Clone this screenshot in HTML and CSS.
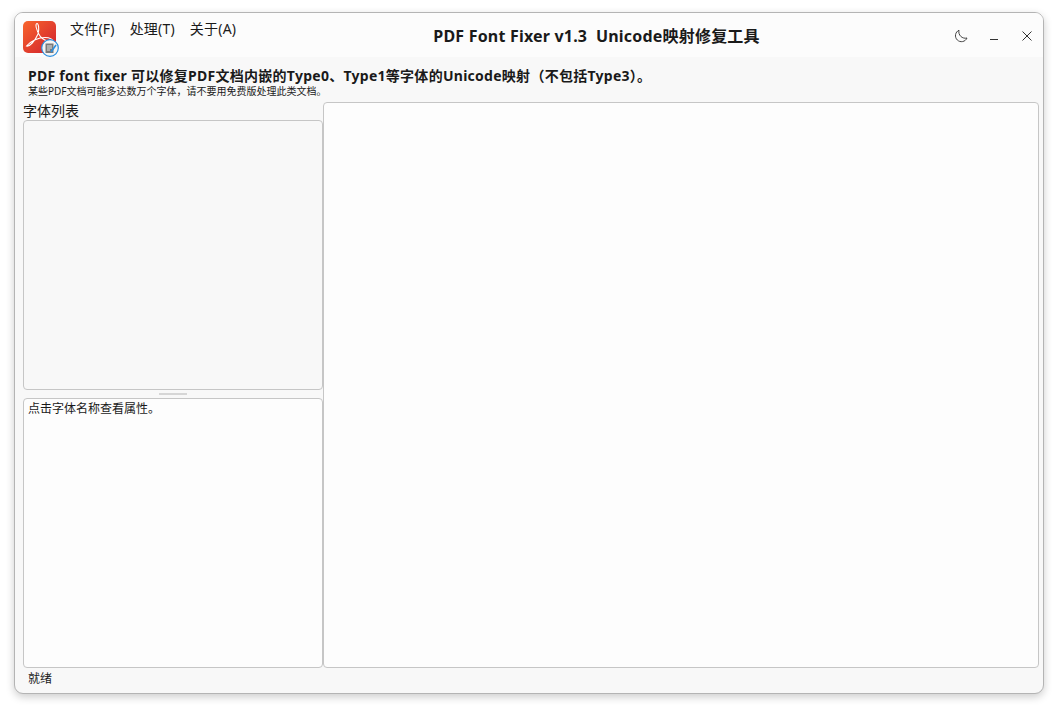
FILE: index.html
```html
<!DOCTYPE html>
<html lang="zh-CN">
<head>
    <meta charset="UTF-8">
    <title>PDF Font Fixer</title>
    <link rel="stylesheet" href="styles.css">
</head>
<body>
    <div class="window">
        <!-- 标题栏 -->
        <div class="titlebar">
            <svg class="app-icon" width="37" height="37" viewBox="0 0 37 37">
                <defs>
                    <linearGradient id="logoBg" x1="0" y1="0" x2="1" y2="1">
                        <stop offset="0" stop-color="#f8652c"/>
                        <stop offset="1" stop-color="#d0202f"/>
                    </linearGradient>
                </defs>
                <rect x="0" y="0" width="33" height="32" rx="5" fill="url(#logoBg)"/>
                <path d="M3.5 25 C6.5 26 12 20 15 13 C16.5 8 15.5 2.5 14 2.5 C12 2.5 13 9 17 15 C19 18 24 21 29 20 C31 19 27 16.5 22 16.5 C16 16.5 8 19.5 3.5 25 Z" fill="none" stroke="#fff" stroke-width="1.1"/>
                <circle cx="27" cy="27" r="8.3" fill="#f4f4f4" stroke="#2b8fe0" stroke-width="1.2"/>
                <rect x="22.5" y="22.5" width="8" height="9.5" fill="#7a7a7a"/>
                <path d="M24 25h5M24 27h5M24 29h3" stroke="#fff" stroke-width="0.8"/>
                <path d="M28 31l5-7" stroke="#2b8fe0" stroke-width="1.6"/>
            </svg>
            <div class="menu">
                <span>文件(F)</span>
                <span>处理(T)</span>
                <span>关于(A)</span>
            </div>
            <div class="app-title">PDF Font Fixer v1.3&nbsp; Unicode映射修复工具</div>
            <div class="win-buttons">
                <svg width="16" height="16" viewBox="0 0 16 16" fill="none" stroke="#444" stroke-width="1">
                    <path d="M6 2.2 A6 6 0 1 0 14 10 A6.5 6.5 0 0 1 6 2.2 Z"/>
                </svg>
                <svg width="16" height="16" viewBox="0 0 16 16" fill="none" stroke="#333" stroke-width="1">
                    <path d="M4 11.5h8"/>
                </svg>
                <svg width="16" height="16" viewBox="0 0 16 16" fill="none" stroke="#333" stroke-width="1">
                    <path d="M3.5 3.5l9 9M12.5 3.5l-9 9"/>
                </svg>
            </div>
        </div>

        <div class="intro">
            <div class="headline">PDF font fixer 可以修复PDF文档内嵌的Type0、Type1等字体的Unicode映射（不包括Type3）。</div>
            <div class="subline">某些PDF文档可能多达数万个字体，请不要用免费版处理此类文档。</div>
        </div>

        <div class="main">
            <div class="left-col">
                <div class="list-label">字体列表</div>
                <div class="font-list"></div>
                <div class="splitter"><span class="splitter-handle"></span></div>
                <div class="font-props">点击字体名称查看属性。</div>
            </div>
            <div class="preview"></div>
        </div>

        <div class="statusbar">就绪</div>
    </div>
</body>
</html>
```

FILE: styles.css
```css
html, body {
    margin: 0;
    padding: 0;
    height: 710px;
    overflow: hidden;
    background-color: #ffffff;
}

body {
    font-family: "Noto Sans", "Noto Sans CJK SC", sans-serif;
    color: #1a1a1a;
}

.window {
    box-sizing: border-box;
    width: 1030px;
    height: 682px;
    margin: 12px 0 0 14px;
    display: flex;
    flex-direction: column;
    background-color: #f8f8f8;
    border: 1px solid #b4b4b4;
    border-radius: 9px;
    box-shadow: 0 3px 8px rgba(0, 0, 0, 0.2);
    overflow: hidden;
}

.titlebar {
    height: 44px;
    flex: none;
    display: flex;
    align-items: flex-start;
    position: relative;
    background-color: #fcfcfc;
}

.app-icon {
    margin: 8px 0 0 8px;
    flex: none;
}

.menu {
    display: flex;
    gap: 15px;
    margin: 6px 0 0 10px;
    font-size: 14px;
    line-height: 20px;
    letter-spacing: 0.2px;
}

.app-title {
    position: absolute;
    left: 0;
    right: 0;
    top: 12px;
    padding-left: 133px;
    text-align: center;
    font-size: 16px;
    line-height: 22px;
    font-weight: bold;
    letter-spacing: 0.2px;
    box-sizing: border-box;
    width: 1030px;
    pointer-events: none;
}

.win-buttons {
    margin: 15px 8px 0 auto;
    display: flex;
    gap: 17px;
}

.intro {
    flex: none;
    padding: 9px 13px 0;
}

.headline {
    font-size: 14px;
    line-height: 19px;
    font-weight: bold;
    letter-spacing: 0.27px;
}

.subline {
    font-size: 10px;
    line-height: 11px;
    padding-top: 1px;
    height: 10px;
}

.main {
    flex: none;
    display: flex;
    padding: 0 4px 0 8px;
    margin-top: 6px;
}

.left-col {
    width: 300px;
    flex: none;
    display: flex;
    flex-direction: column;
}

.list-label {
    font-size: 14px;
    line-height: 17px;
    height: 18px;
}

.font-list {
    box-sizing: border-box;
    height: 270px;
    background-color: #f8f8f8;
    border: 1px solid #c6c6c6;
    border-radius: 4px;
}

.splitter {
    height: 8px;
    display: flex;
    justify-content: center;
    align-items: center;
}

.splitter-handle {
    width: 28px;
    height: 2px;
    background-color: #d6d6d6;
}

.font-props {
    box-sizing: border-box;
    height: 270px;
    padding: 2px 4px;
    font-size: 12px;
    line-height: 16px;
    background-color: #fdfdfd;
    border: 1px solid #c6c6c6;
    border-radius: 4px;
}

.preview {
    box-sizing: border-box;
    flex: 1;
    height: 566px;
    background-color: #fdfdfd;
    border: 1px solid #c6c6c6;
    border-radius: 4px;
}

.statusbar {
    flex: none;
    height: 25px;
    padding-left: 13px;
    font-size: 12px;
    line-height: 21px;
}
```
